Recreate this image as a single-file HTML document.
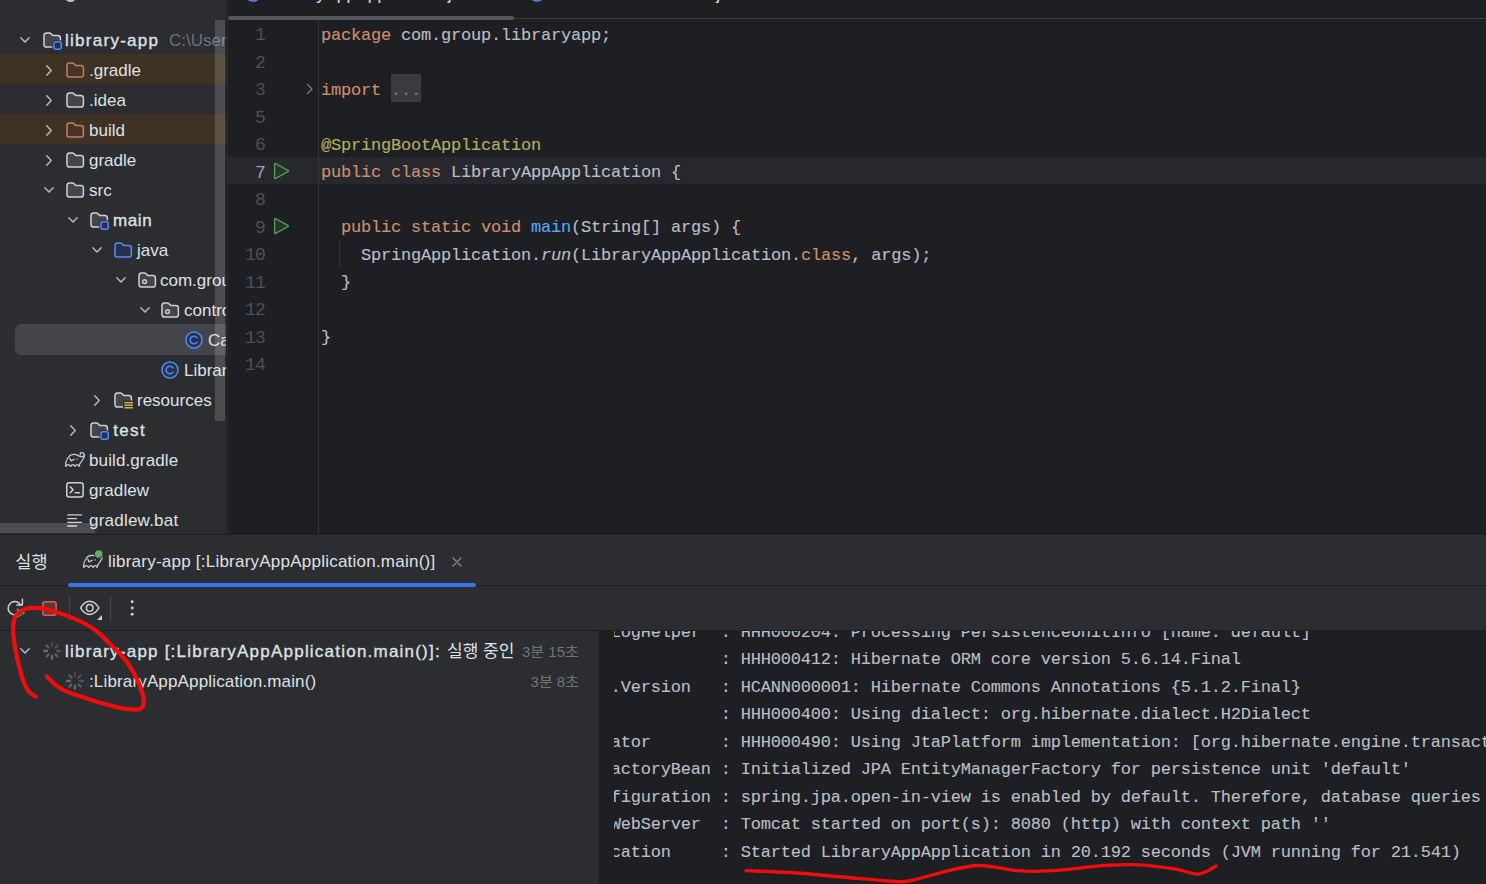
<!DOCTYPE html>
<html lang="ko">
<head>
<meta charset="utf-8">
<title>library-app</title>
<style>
*{box-sizing:border-box;margin:0;padding:0}
html,body{width:1486px;height:884px;overflow:hidden;background:#2b2d30}
body{position:relative;font-family:"Liberation Sans","Noto Sans CJK KR",sans-serif;color:#dfe1e5}
.abs{position:absolute}
#proj{left:0;top:0;width:226px;height:534px;background:#2b2d30;overflow:hidden}
.row{position:absolute;left:0;width:227px;height:30px;line-height:30px;font-size:17px;white-space:nowrap;color:#dfe1e5}
.row.hl{background:#3d3223}
.row .t{position:absolute;top:1.5px;left:0}
.row svg,.brow svg{position:absolute;overflow:visible}
.b{font-weight:normal;-webkit-text-stroke:.35px;letter-spacing:1.22px}
.gray{color:#6f737a}
#sel{left:15px;top:324.2px;width:211px;height:30.7px;background:#43454a;border-radius:6px 0 0 6px}
#vsb{left:215px;top:20px;width:10px;height:401px;background:rgba(255,255,255,.155)}
#hsb{left:0;top:523px;width:95px;height:10px;background:rgba(255,255,255,.155)}
#ed{left:228px;top:0;width:1258px;height:534px;background:#1e1f22;overflow:hidden}
#tabline{left:0;top:18px;width:1258px;height:1px;background:#393b40}
#tabthumb{left:0;top:15.8px;width:286px;height:3.8px;background:#55575c;border-radius:2px}
#gline{left:90px;top:19px;width:1px;height:515px;background:#313438}
#cur{left:0;top:157px;width:1258px;height:27px;background:#26282e}
.ln{position:absolute;left:0;width:36.9px;text-align:right;font-family:"Liberation Mono","Noto Sans CJK KR",monospace;font-size:18px;letter-spacing:-.8px;color:#4b5059;height:27.5px;line-height:27.5px}
.ln.on{color:#a1a3ab}
.cl{position:absolute;left:93px;font-family:"Liberation Mono","Noto Sans CJK KR",monospace;font-size:17px;letter-spacing:-.2px;color:#bcbec4;height:27.5px;line-height:27.5px;white-space:pre;-webkit-text-stroke:.12px}
.k{color:#cf8e6d}.an{color:#b3ae60}.fn{color:#56a8f5}.it{font-style:italic}
.fold{background:#393b40;color:#7a7e85;display:inline-block;height:27.5px;vertical-align:top;position:relative;top:-2.3px;line-height:34.5px}
#bot{left:0;top:534px;width:1486px;height:350px;background:#2b2d30;overflow:hidden}
#bot .hl1{left:0;top:51px;width:1486px;height:1px;background:#1e1f22}
#bot .hl2{left:0;top:96px;width:1486px;height:1px;background:#1e1f22}
#ul{left:68px;top:49px;width:408px;height:4px;background:#3574f0;border-radius:2px}
.tabt{position:absolute;font-size:17px;line-height:30px;height:30px;white-space:nowrap;color:#dfe1e5}
.sep{position:absolute;top:62px;width:1px;height:25px;background:#43454a}
.brow{position:absolute;left:0;width:599px;height:30px;line-height:30px;font-size:17px;white-space:nowrap;color:#dfe1e5}
.brow .t{position:absolute;top:1.5px}
#con{left:599px;top:97px;width:887px;height:253px;background:#1e1f22;overflow:hidden}
#conclip{left:14.5px;top:0;width:873px;height:253px;overflow:hidden}
.co{position:absolute;left:-2.8px;font-family:"Liberation Mono","Noto Sans CJK KR",monospace;font-size:17px;letter-spacing:-.2px;color:#bcbec4;height:27.5px;line-height:27.5px;white-space:pre;-webkit-text-stroke:.12px}
#ann{left:0;top:0;width:1486px;height:884px;pointer-events:none}
</style>
</head>
<body>
<div id="proj" class="abs"><div class="abs" style="left:64.5px;top:-9.5px;width:11.5px;height:11.5px;border-radius:50%;background:#c3c5ca"></div><div class="abs" id="sel"></div><div class="row" style="top:24px"><svg style="left:20px;top:13px" width="10" height="6" viewBox="0 0 10 6"><path d="M0.8 0.8 L5 5 L9.2 0.8" fill="none" stroke="#b4b8bf" stroke-width="1.5" stroke-linecap="round" stroke-linejoin="round"/></svg><svg style="left:43px;top:8px" width="19" height="16" viewBox="0 0 19 16"><path d="M1 3.6 Q1 1 3.6 1 H6.3 Q7.3 1 8 1.7 L9.4 3.1 Q9.9 3.6 10.7 3.6 H14.8 Q17.4 3.6 17.4 6.2 V12.4 Q17.4 15 14.8 15 H3.6 Q1 15 1 12.4 Z" fill="#43454a" stroke="#ced0d6" stroke-width="1.5" stroke-linejoin="round"/><rect x="9.3" y="8.2" width="10.5" height="10.5" rx="3" fill="#2b2d30"/><rect x="10.9" y="9.8" width="7.4" height="7.4" rx="2" fill="#25324d" stroke="#548af7" stroke-width="1.5"/></svg><span class="t b" style="left:65px;letter-spacing:1.27px">library-app</span><span class="t gray" style="left:169px">C:\Users\dev</span></div><div class="row hl" style="top:54px"><svg style="left:46px;top:10.5px" width="6" height="11" viewBox="0 0 6 11"><path d="M0.8 0.8 L5.2 5.5 L0.8 10.2" fill="none" stroke="#b4b8bf" stroke-width="1.5" stroke-linecap="round" stroke-linejoin="round"/></svg><svg style="left:66px;top:8px" width="19" height="16" viewBox="0 0 19 16"><path d="M1 3.6 Q1 1 3.6 1 H6.3 Q7.3 1 8 1.7 L9.4 3.1 Q9.9 3.6 10.7 3.6 H14.8 Q17.4 3.6 17.4 6.2 V12.4 Q17.4 15 14.8 15 H3.6 Q1 15 1 12.4 Z" fill="#45322b" stroke="#c77d55" stroke-width="1.5" stroke-linejoin="round"/></svg><span class="t " style="left:89px">.gradle</span></div><div class="row" style="top:84px"><svg style="left:46px;top:10.5px" width="6" height="11" viewBox="0 0 6 11"><path d="M0.8 0.8 L5.2 5.5 L0.8 10.2" fill="none" stroke="#b4b8bf" stroke-width="1.5" stroke-linecap="round" stroke-linejoin="round"/></svg><svg style="left:66px;top:8px" width="19" height="16" viewBox="0 0 19 16"><path d="M1 3.6 Q1 1 3.6 1 H6.3 Q7.3 1 8 1.7 L9.4 3.1 Q9.9 3.6 10.7 3.6 H14.8 Q17.4 3.6 17.4 6.2 V12.4 Q17.4 15 14.8 15 H3.6 Q1 15 1 12.4 Z" fill="#43454a" stroke="#ced0d6" stroke-width="1.5" stroke-linejoin="round"/></svg><span class="t " style="left:89px">.idea</span></div><div class="row hl" style="top:114px"><svg style="left:46px;top:10.5px" width="6" height="11" viewBox="0 0 6 11"><path d="M0.8 0.8 L5.2 5.5 L0.8 10.2" fill="none" stroke="#b4b8bf" stroke-width="1.5" stroke-linecap="round" stroke-linejoin="round"/></svg><svg style="left:66px;top:8px" width="19" height="16" viewBox="0 0 19 16"><path d="M1 3.6 Q1 1 3.6 1 H6.3 Q7.3 1 8 1.7 L9.4 3.1 Q9.9 3.6 10.7 3.6 H14.8 Q17.4 3.6 17.4 6.2 V12.4 Q17.4 15 14.8 15 H3.6 Q1 15 1 12.4 Z" fill="#45322b" stroke="#c77d55" stroke-width="1.5" stroke-linejoin="round"/></svg><span class="t " style="left:89px">build</span></div><div class="row" style="top:144px"><svg style="left:46px;top:10.5px" width="6" height="11" viewBox="0 0 6 11"><path d="M0.8 0.8 L5.2 5.5 L0.8 10.2" fill="none" stroke="#b4b8bf" stroke-width="1.5" stroke-linecap="round" stroke-linejoin="round"/></svg><svg style="left:66px;top:8px" width="19" height="16" viewBox="0 0 19 16"><path d="M1 3.6 Q1 1 3.6 1 H6.3 Q7.3 1 8 1.7 L9.4 3.1 Q9.9 3.6 10.7 3.6 H14.8 Q17.4 3.6 17.4 6.2 V12.4 Q17.4 15 14.8 15 H3.6 Q1 15 1 12.4 Z" fill="#43454a" stroke="#ced0d6" stroke-width="1.5" stroke-linejoin="round"/></svg><span class="t " style="left:89px">gradle</span></div><div class="row" style="top:174px"><svg style="left:44px;top:13px" width="10" height="6" viewBox="0 0 10 6"><path d="M0.8 0.8 L5 5 L9.2 0.8" fill="none" stroke="#b4b8bf" stroke-width="1.5" stroke-linecap="round" stroke-linejoin="round"/></svg><svg style="left:66px;top:8px" width="19" height="16" viewBox="0 0 19 16"><path d="M1 3.6 Q1 1 3.6 1 H6.3 Q7.3 1 8 1.7 L9.4 3.1 Q9.9 3.6 10.7 3.6 H14.8 Q17.4 3.6 17.4 6.2 V12.4 Q17.4 15 14.8 15 H3.6 Q1 15 1 12.4 Z" fill="#43454a" stroke="#ced0d6" stroke-width="1.5" stroke-linejoin="round"/></svg><span class="t " style="left:89px">src</span></div><div class="row" style="top:204px"><svg style="left:68px;top:13px" width="10" height="6" viewBox="0 0 10 6"><path d="M0.8 0.8 L5 5 L9.2 0.8" fill="none" stroke="#b4b8bf" stroke-width="1.5" stroke-linecap="round" stroke-linejoin="round"/></svg><svg style="left:90px;top:8px" width="19" height="16" viewBox="0 0 19 16"><path d="M1 3.6 Q1 1 3.6 1 H6.3 Q7.3 1 8 1.7 L9.4 3.1 Q9.9 3.6 10.7 3.6 H14.8 Q17.4 3.6 17.4 6.2 V12.4 Q17.4 15 14.8 15 H3.6 Q1 15 1 12.4 Z" fill="#43454a" stroke="#ced0d6" stroke-width="1.5" stroke-linejoin="round"/><rect x="9.3" y="8.2" width="10.5" height="10.5" rx="3" fill="#2b2d30"/><rect x="10.9" y="9.8" width="7.4" height="7.4" rx="2" fill="#25324d" stroke="#548af7" stroke-width="1.5"/></svg><span class="t b" style="left:113px;letter-spacing:0.6px">main</span></div><div class="row" style="top:234px"><svg style="left:92px;top:13px" width="10" height="6" viewBox="0 0 10 6"><path d="M0.8 0.8 L5 5 L9.2 0.8" fill="none" stroke="#b4b8bf" stroke-width="1.5" stroke-linecap="round" stroke-linejoin="round"/></svg><svg style="left:114px;top:8px" width="19" height="16" viewBox="0 0 19 16"><path d="M1 3.6 Q1 1 3.6 1 H6.3 Q7.3 1 8 1.7 L9.4 3.1 Q9.9 3.6 10.7 3.6 H14.8 Q17.4 3.6 17.4 6.2 V12.4 Q17.4 15 14.8 15 H3.6 Q1 15 1 12.4 Z" fill="#25324d" stroke="#548af7" stroke-width="1.5" stroke-linejoin="round"/></svg><span class="t " style="left:137px">java</span></div><div class="row" style="top:264px"><svg style="left:116px;top:13px" width="10" height="6" viewBox="0 0 10 6"><path d="M0.8 0.8 L5 5 L9.2 0.8" fill="none" stroke="#b4b8bf" stroke-width="1.5" stroke-linecap="round" stroke-linejoin="round"/></svg><svg style="left:138px;top:8px" width="19" height="16" viewBox="0 0 19 16"><path d="M1 3.6 Q1 1 3.6 1 H6.3 Q7.3 1 8 1.7 L9.4 3.1 Q9.9 3.6 10.7 3.6 H14.8 Q17.4 3.6 17.4 6.2 V12.4 Q17.4 15 14.8 15 H3.6 Q1 15 1 12.4 Z" fill="#43454a" stroke="#ced0d6" stroke-width="1.5" stroke-linejoin="round"/><circle cx="6.6" cy="9.6" r="1.9" fill="none" stroke="#ced0d6" stroke-width="1.4"/></svg><span class="t " style="left:160px">com.group.libraryapp</span></div><div class="row" style="top:294px"><svg style="left:140px;top:13px" width="10" height="6" viewBox="0 0 10 6"><path d="M0.8 0.8 L5 5 L9.2 0.8" fill="none" stroke="#b4b8bf" stroke-width="1.5" stroke-linecap="round" stroke-linejoin="round"/></svg><svg style="left:160.8px;top:8px" width="19" height="16" viewBox="0 0 19 16"><path d="M1 3.6 Q1 1 3.6 1 H6.3 Q7.3 1 8 1.7 L9.4 3.1 Q9.9 3.6 10.7 3.6 H14.8 Q17.4 3.6 17.4 6.2 V12.4 Q17.4 15 14.8 15 H3.6 Q1 15 1 12.4 Z" fill="#43454a" stroke="#ced0d6" stroke-width="1.5" stroke-linejoin="round"/><circle cx="6.6" cy="9.6" r="1.9" fill="none" stroke="#ced0d6" stroke-width="1.4"/></svg><span class="t " style="left:184px">controller</span></div><div class="row" style="top:324px"><svg style="left:185px;top:7px" width="18" height="18" viewBox="0 0 18 18"><circle cx="9" cy="9" r="8" fill="#25324d" stroke="#548af7" stroke-width="1.5"/><path d="M12.1 6.9 A3.8 3.8 0 1 0 12.1 11.1" fill="none" stroke="#548af7" stroke-width="1.5" stroke-linecap="round"/></svg><span class="t " style="left:208px">CalculatorController</span></div><div class="row" style="top:354px"><svg style="left:161px;top:7px" width="18" height="18" viewBox="0 0 18 18"><circle cx="9" cy="9" r="8" fill="#25324d" stroke="#548af7" stroke-width="1.5"/><path d="M12.1 6.9 A3.8 3.8 0 1 0 12.1 11.1" fill="none" stroke="#548af7" stroke-width="1.5" stroke-linecap="round"/></svg><span class="t " style="left:184px">LibraryAppApplication</span></div><div class="row" style="top:384px"><svg style="left:94px;top:10.5px" width="6" height="11" viewBox="0 0 6 11"><path d="M0.8 0.8 L5.2 5.5 L0.8 10.2" fill="none" stroke="#b4b8bf" stroke-width="1.5" stroke-linecap="round" stroke-linejoin="round"/></svg><svg style="left:114px;top:8px" width="19" height="16" viewBox="0 0 19 16"><path d="M1 3.6 Q1 1 3.6 1 H6.3 Q7.3 1 8 1.7 L9.4 3.1 Q9.9 3.6 10.7 3.6 H14.8 Q17.4 3.6 17.4 6.2 V12.4 Q17.4 15 14.8 15 H3.6 Q1 15 1 12.4 Z" fill="#43454a" stroke="#ced0d6" stroke-width="1.5" stroke-linejoin="round"/><rect x="9" y="8.6" width="10.5" height="9.5" fill="#2b2d30"/><path d="M10.3 10.8 H19 M10.3 13.3 H19 M10.3 15.8 H19" stroke="#d6ae58" stroke-width="1.5" fill="none"/></svg><span class="t " style="left:137px">resources</span></div><div class="row" style="top:414px"><svg style="left:70px;top:10.5px" width="6" height="11" viewBox="0 0 6 11"><path d="M0.8 0.8 L5.2 5.5 L0.8 10.2" fill="none" stroke="#b4b8bf" stroke-width="1.5" stroke-linecap="round" stroke-linejoin="round"/></svg><svg style="left:90px;top:8px" width="19" height="16" viewBox="0 0 19 16"><path d="M1 3.6 Q1 1 3.6 1 H6.3 Q7.3 1 8 1.7 L9.4 3.1 Q9.9 3.6 10.7 3.6 H14.8 Q17.4 3.6 17.4 6.2 V12.4 Q17.4 15 14.8 15 H3.6 Q1 15 1 12.4 Z" fill="#43454a" stroke="#ced0d6" stroke-width="1.5" stroke-linejoin="round"/><rect x="9.3" y="8.2" width="10.5" height="10.5" rx="3" fill="#2b2d30"/><rect x="10.9" y="9.8" width="7.4" height="7.4" rx="2" fill="#25324d" stroke="#548af7" stroke-width="1.5"/></svg><span class="t b" style="left:113.2px;letter-spacing:1.35px">test</span></div><div class="row" style="top:444px"><svg style="left:65.1px;top:8.1px" width="20" height="15" viewBox="0 0 20 15"><path d="M0.8 14.4 C0.1 11.2 1.4 8 3.6 5 C5 3 7.4 2.3 9.5 2.4 C12 2.6 14 4.4 16.6 4.8 C17.6 4.9 18.3 4.4 18.6 3.8 M15.6 2.6 C14.6 1.7 15.2 0.6 16.4 0.6 C18 0.5 19.3 1.7 19.4 3.4 C19.5 5.5 18 7.5 16.5 9.3 C15 11 14.2 12.5 14.1 14.4 M0.8 14.4 Q3.2 10.8 5.7 14.4 Q7.7 10.8 10.1 14.4 Q12.1 10.8 14.1 14.4 M4.8 6.3 L6.1 8.9 L9.3 7.3" fill="none" stroke="#ced0d6" stroke-width="1.25" stroke-linejoin="round" stroke-linecap="round"/><circle cx="12.1" cy="6.9" r="0.7" fill="#ced0d6"/></svg><span class="t " style="left:89px;letter-spacing:0.11px">build.gradle</span></div><div class="row" style="top:474px"><svg style="left:66px;top:8px" width="19" height="16" viewBox="0 0 19 16"><rect x="0.75" y="0.75" width="16.4" height="14.2" rx="2.5" fill="#2f3135" stroke="#ced0d6" stroke-width="1.5"/><path d="M4.2 4.9 L7.2 7.8 L4.2 10.7 M9.2 10.8 H13.4" fill="none" stroke="#ced0d6" stroke-width="1.5" stroke-linecap="round" stroke-linejoin="round"/></svg><span class="t " style="left:89px;letter-spacing:0.1px">gradlew</span></div><div class="row" style="top:504px"><svg style="left:67.3px;top:9.5px" width="16" height="13" viewBox="0 0 16 13"><path d="M0.7 0.9 H14.6 M0.7 4.6 H9.6 M0.7 8.3 H14.6 M0.7 12 H9.6" fill="none" stroke="#ced0d6" stroke-width="1.3" stroke-linecap="round"/></svg><span class="t " style="left:89px;letter-spacing:0.22px">gradlew.bat</span></div><div class="abs" id="vsb"></div><div class="abs" id="hsb"></div></div>
<div class="abs" style="left:226px;top:0;width:1px;height:534px;background:#1e1f22"></div>
<div id="ed" class="abs"><div class="abs" id="cur"></div><div class="abs" id="gline"></div><div class="ln" style="top:22.26px">1</div><div class="cl" style="top:21.51px"><span class="k">package</span> com.group.libraryapp;</div><div class="ln" style="top:49.76px">2</div><div class="ln" style="top:77.26px">3</div><div class="cl" style="top:76.51px"><span class="k">import</span> <span class="fold">...</span></div><div class="ln" style="top:104.76px">5</div><div class="ln" style="top:132.26px">6</div><div class="cl" style="top:131.51px"><span class="an">@SpringBootApplication</span></div><div class="ln on" style="top:159.76px">7</div><div class="cl" style="top:159.01px"><span class="k">public class</span> LibraryAppApplication {</div><div class="ln" style="top:187.26px">8</div><div class="ln" style="top:214.76px">9</div><div class="cl" style="top:214.01px">  <span class="k">public static void</span> <span class="fn">main</span>(String[] args) {</div><div class="ln" style="top:242.26px">10</div><div class="cl" style="top:241.51px">    SpringApplication.<span class="it">run</span>(LibraryAppApplication.<span class="k">class</span>, args);</div><div class="ln" style="top:269.76px">11</div><div class="cl" style="top:269.01px">  }</div><div class="ln" style="top:297.26px">12</div><div class="ln" style="top:324.76px">13</div><div class="cl" style="top:324.01px">}</div><div class="ln" style="top:352.26px">14</div><svg class="abs" style="left:44.8px;top:161.8px" width="17" height="18" viewBox="0 0 17 18"><path d="M1.6 2.2 Q1.6 1 2.7 1.6 L14.8 8.3 Q15.9 9 14.8 9.7 L2.7 16.4 Q1.6 17 1.6 15.8 Z" fill="#253627" stroke="#57965c" stroke-width="1.4" stroke-linejoin="round"/></svg><svg class="abs" style="left:44.8px;top:216.8px" width="17" height="18" viewBox="0 0 17 18"><path d="M1.6 2.2 Q1.6 1 2.7 1.6 L14.8 8.3 Q15.9 9 14.8 9.7 L2.7 16.4 Q1.6 17 1.6 15.8 Z" fill="#253627" stroke="#57965c" stroke-width="1.4" stroke-linejoin="round"/></svg><svg class="abs" style="left:78px;top:83px" width="8" height="12" viewBox="0 0 8 12"><path d="M1.5 1.5 L6 6 L1.5 10.5" fill="none" stroke="#7a7e85" stroke-width="1.3" stroke-linecap="round" stroke-linejoin="round"/></svg><div class="abs" style="left:111px;top:239.5px;width:1px;height:29px;background:#313438"></div><svg class="abs" style="left:15.5px;top:-16px" width="18" height="18" viewBox="0 0 18 18"><circle cx="9" cy="9" r="8" fill="#25324d" stroke="#548af7" stroke-width="1.5"/></svg><span class="abs" style="left:43px;top:-19.9px;font-size:17px;line-height:30px;white-space:nowrap;color:#dfe1e5;letter-spacing:.3px">LibraryAppApplication.java</span><svg class="abs" style="left:300px;top:-16px" width="18" height="18" viewBox="0 0 18 18"><circle cx="9" cy="9" r="8" fill="#25324d" stroke="#548af7" stroke-width="1.5"/></svg><span class="abs" style="left:328px;top:-19.9px;font-size:17px;line-height:30px;white-space:nowrap;color:#dfe1e5;letter-spacing:.3px">CalculatorController.java</span><div class="abs" id="tabline"></div><div class="abs" id="tabthumb"></div></div>
<div id="bot" class="abs"><div class="abs" style="left:0;top:0;width:1486px;height:1px;background:#1e1f22"></div><div class="abs hl1"></div><div class="abs hl2"></div><div class="abs" id="ul"></div><span class="tabt" style="left:15.3px;top:12.6px;font-size:17.5px">실행</span><div class="brow" style="top:12px;width:500px"><svg style="left:83.4px;top:7.2px" width="20" height="15" viewBox="0 0 20 15"><path d="M0.8 14.4 C0.1 11.2 1.4 8 3.6 5 C5 3 7.4 2.3 9.5 2.4 C12 2.6 14 4.4 16.6 4.8 C17.6 4.9 18.3 4.4 18.6 3.8 M15.6 2.6 C14.6 1.7 15.2 0.6 16.4 0.6 C18 0.5 19.3 1.7 19.4 3.4 C19.5 5.5 18 7.5 16.5 9.3 C15 11 14.2 12.5 14.1 14.4 M0.8 14.4 Q3.2 10.8 5.7 14.4 Q7.7 10.8 10.1 14.4 Q12.1 10.8 14.1 14.4 M4.8 6.3 L6.1 8.9 L9.3 7.3" fill="none" stroke="#ced0d6" stroke-width="1.25" stroke-linejoin="round" stroke-linecap="round"/><circle cx="12.1" cy="6.9" r="0.7" fill="#ced0d6"/><circle cx="15.7" cy="1" r="4.9" fill="#2b2d30"/><circle cx="15.7" cy="1" r="3.8" fill="#5fad65"/></svg></div><span class="tabt" style="left:108px;top:13.2px;letter-spacing:.23px">library-app [:LibraryAppApplication.main()]</span><svg class="abs" style="left:452px;top:23px" width="10" height="10" viewBox="0 0 10 10"><path d="M1 1 L9 9 M9 1 L1 9" stroke="#868a91" stroke-width="1.3" stroke-linecap="round"/></svg><svg class="abs" style="left:6px;top:64px" width="20" height="20" viewBox="0 0 20 20"><path d="M14.5 6.8 A6.6 6.6 0 1 0 11.6 16.1" fill="none" stroke="#ced0d6" stroke-width="1.5" stroke-linecap="round"/><path d="M16.4 1.2 V6.9 H11" fill="none" stroke="#ced0d6" stroke-width="1.5" stroke-linecap="round" stroke-linejoin="round"/><path d="M11.4 11 L18.4 15 L11.4 19 Z" fill="#253627" stroke="#57965c" stroke-width="1.3" stroke-linejoin="round"/></svg><svg class="abs" style="left:42.1px;top:66.8px" width="16" height="16" viewBox="0 0 16 16"><rect x="0.75" y="0.75" width="13.4" height="13.6" rx="2.5" fill="#5e3838" stroke="#db5c5c" stroke-width="1.5"/></svg><div class="sep" style="left:69px"></div><svg class="abs" style="left:79.3px;top:66.2px" width="24" height="21" viewBox="0 0 24 21"><path d="M1.55 7.9 C4.2 3.4 7.5 1.35 10.7 1.35 C13.9 1.35 17.2 3.4 19.85 7.9 C17.2 12.4 13.9 14.45 10.7 14.45 C7.5 14.45 4.2 12.4 1.55 7.9 Z" fill="none" stroke="#ced0d6" stroke-width="1.5" stroke-linejoin="round"/><circle cx="10.7" cy="7.9" r="3.3" fill="none" stroke="#ced0d6" stroke-width="1.5"/><path d="M23 15 V20 H18 Z" fill="#ced0d6"/></svg><div class="sep" style="left:110px"></div><svg class="abs" style="left:129px;top:65px" width="6" height="18" viewBox="0 0 6 18"><circle cx="3.2" cy="2.7" r="1.45" fill="#ced0d6"/><circle cx="3.2" cy="9" r="1.45" fill="#ced0d6"/><circle cx="3.2" cy="15.3" r="1.45" fill="#ced0d6"/></svg><div class="brow" style="top:101.1px"><svg style="left:20px;top:13px" width="10" height="6" viewBox="0 0 10 6"><path d="M0.8 0.8 L5 5 L9.2 0.8" fill="none" stroke="#b4b8bf" stroke-width="1.5" stroke-linecap="round" stroke-linejoin="round"/></svg><svg style="left:42px;top:6px" width="20" height="20" viewBox="-10 -10 20 20"><line x1="0.00" y1="-5.00" x2="0.00" y2="-7.80" stroke="#474a4f" stroke-width="2.3" stroke-linecap="round"/><line x1="3.54" y1="-3.54" x2="5.52" y2="-5.52" stroke="#4d5055" stroke-width="2.3" stroke-linecap="round"/><line x1="5.00" y1="0.00" x2="7.80" y2="0.00" stroke="#515459" stroke-width="2.3" stroke-linecap="round"/><line x1="3.54" y1="3.54" x2="5.52" y2="5.52" stroke="#5c5f64" stroke-width="2.3" stroke-linecap="round"/><line x1="0.00" y1="5.00" x2="0.00" y2="7.80" stroke="#66696e" stroke-width="2.3" stroke-linecap="round"/><line x1="-3.54" y1="3.54" x2="-5.52" y2="5.52" stroke="#616469" stroke-width="2.3" stroke-linecap="round"/><line x1="-5.00" y1="0.00" x2="-7.80" y2="0.00" stroke="#6a6d72" stroke-width="2.3" stroke-linecap="round"/><line x1="-3.54" y1="-3.54" x2="-5.52" y2="-5.52" stroke="#5d6065" stroke-width="2.3" stroke-linecap="round"/></svg><span class="t b" style="left:65px">library-app [:LibraryAppApplication.main()]:</span><span class="t" style="left:447px">실행 중인</span><span class="t gray" style="left:522px;font-size:15px">3분 15초</span></div><div class="brow" style="top:131.1px"><svg style="left:64.8px;top:5.800000000000001px" width="20" height="20" viewBox="-10 -10 20 20"><line x1="0.00" y1="-5.00" x2="0.00" y2="-7.80" stroke="#474a4f" stroke-width="2.3" stroke-linecap="round"/><line x1="3.54" y1="-3.54" x2="5.52" y2="-5.52" stroke="#4d5055" stroke-width="2.3" stroke-linecap="round"/><line x1="5.00" y1="0.00" x2="7.80" y2="0.00" stroke="#515459" stroke-width="2.3" stroke-linecap="round"/><line x1="3.54" y1="3.54" x2="5.52" y2="5.52" stroke="#5c5f64" stroke-width="2.3" stroke-linecap="round"/><line x1="0.00" y1="5.00" x2="0.00" y2="7.80" stroke="#66696e" stroke-width="2.3" stroke-linecap="round"/><line x1="-3.54" y1="3.54" x2="-5.52" y2="5.52" stroke="#616469" stroke-width="2.3" stroke-linecap="round"/><line x1="-5.00" y1="0.00" x2="-7.80" y2="0.00" stroke="#6a6d72" stroke-width="2.3" stroke-linecap="round"/><line x1="-3.54" y1="-3.54" x2="-5.52" y2="-5.52" stroke="#5d6065" stroke-width="2.3" stroke-linecap="round"/></svg><span class="t" style="left:89px;letter-spacing:.15px">:LibraryAppApplication.main()</span><span class="t gray" style="right:20px;font-size:15px">3분 8초</span></div><div class="abs" id="con"><div class="abs" id="conclip"><div class="co" style="top:-12.29px">LogHelper  : HHH000204: Processing PersistenceUnitInfo [name: default]</div><div class="co" style="top:15.21px">           : HHH000412: Hibernate ORM core version 5.6.14.Final</div><div class="co" style="top:42.71px">.Version   : HCANN000001: Hibernate Commons Annotations {5.1.2.Final}</div><div class="co" style="top:70.21px">           : HHH000400: Using dialect: org.hibernate.dialect.H2Dialect</div><div class="co" style="top:97.71px">ator       : HHH000490: Using JtaPlatform implementation: [org.hibernate.engine.transaction.jta.platform.internal.NoJtaPlatform]</div><div class="co" style="top:125.21px">actoryBean : Initialized JPA EntityManagerFactory for persistence unit 'default'</div><div class="co" style="top:152.71px">figuration : spring.jpa.open-in-view is enabled by default. Therefore, database queries may be performed during view rendering.</div><div class="co" style="top:180.21px">WebServer  : Tomcat started on port(s): 8080 (http) with context path ''</div><div class="co" style="top:207.71px">cation     : Started LibraryAppApplication in 20.192 seconds (JVM running for 21.541)</div></div></div></div>
<svg class="abs" id="ann" width="1486" height="884" viewBox="0 0 1486 884"><path d="M36.0 696.8 C34.9 696.0 31.2 694.5 29.2 692.0 C27.1 689.5 25.2 685.4 23.7 681.9 C22.2 678.4 21.4 674.6 20.4 671.0 C19.4 667.4 18.5 664.2 17.6 660.1 C16.7 656.0 15.6 651.1 14.9 646.6 C14.2 642.1 13.5 637.1 13.3 633.0 C13.1 628.9 13.0 625.3 13.6 622.1 C14.2 618.9 15.2 616.1 17.0 614.0 C18.8 611.9 21.3 610.2 24.4 609.2 C27.4 608.2 31.7 607.9 35.3 607.9 C38.9 607.9 42.0 608.3 46.1 609.2 C50.2 610.1 54.7 611.6 59.7 613.3 C64.7 615.0 71.0 617.2 76.0 619.4 C81.0 621.5 85.5 623.7 89.6 626.2 C93.7 628.7 96.8 631.2 100.4 634.4 C104.0 637.6 107.7 641.6 111.3 645.2 C114.9 648.8 118.9 652.4 122.1 656.0 C125.3 659.6 127.8 663.0 130.3 666.9 C132.8 670.8 135.1 675.0 137.0 679.1 C138.9 683.2 140.7 687.8 141.8 691.4 C142.9 695.0 143.8 698.2 143.8 700.9 C143.8 703.6 143.2 706.1 141.8 707.6 C140.5 709.1 139.0 709.6 135.7 709.7 C132.4 709.8 127.5 709.3 122.1 708.3 C116.7 707.3 109.4 705.4 103.1 703.6 C96.8 701.8 90.0 699.4 84.1 697.5 C78.2 695.6 72.4 693.9 67.9 692.0 C63.4 690.1 60.0 687.9 57.0 685.9 C54.0 683.9 51.9 681.4 50.2 679.8 C48.5 678.2 47.4 677.0 46.8 676.4" fill="none" stroke="#f00c0c" stroke-width="4.2" stroke-linecap="round" stroke-linejoin="round"/><path d="M746.0 870.7 C753.3 871.0 773.9 871.5 790.0 872.5 C806.1 873.5 826.2 875.6 842.5 877.0 C858.8 878.4 876.9 880.3 888.0 881.0 C899.1 881.7 899.7 882.5 909.0 881.0 C918.3 879.5 932.3 874.4 944.0 871.8 C955.7 869.2 966.8 865.7 979.0 865.5 C991.2 865.3 1005.2 869.8 1017.4 870.7 C1029.6 871.6 1037.4 871.6 1052.0 870.7 C1066.6 869.8 1090.3 866.5 1105.0 865.5 C1119.7 864.5 1128.3 864.2 1140.0 864.8 C1151.7 865.4 1165.7 867.5 1175.0 869.0 C1184.3 870.5 1190.8 873.5 1196.0 874.0 C1201.2 874.5 1202.7 873.1 1206.0 871.8 C1209.3 870.5 1214.3 867.0 1216.0 866.0" fill="none" stroke="#f00c0c" stroke-width="3.3" stroke-linecap="round" stroke-linejoin="round"/></svg>
</body>
</html>
